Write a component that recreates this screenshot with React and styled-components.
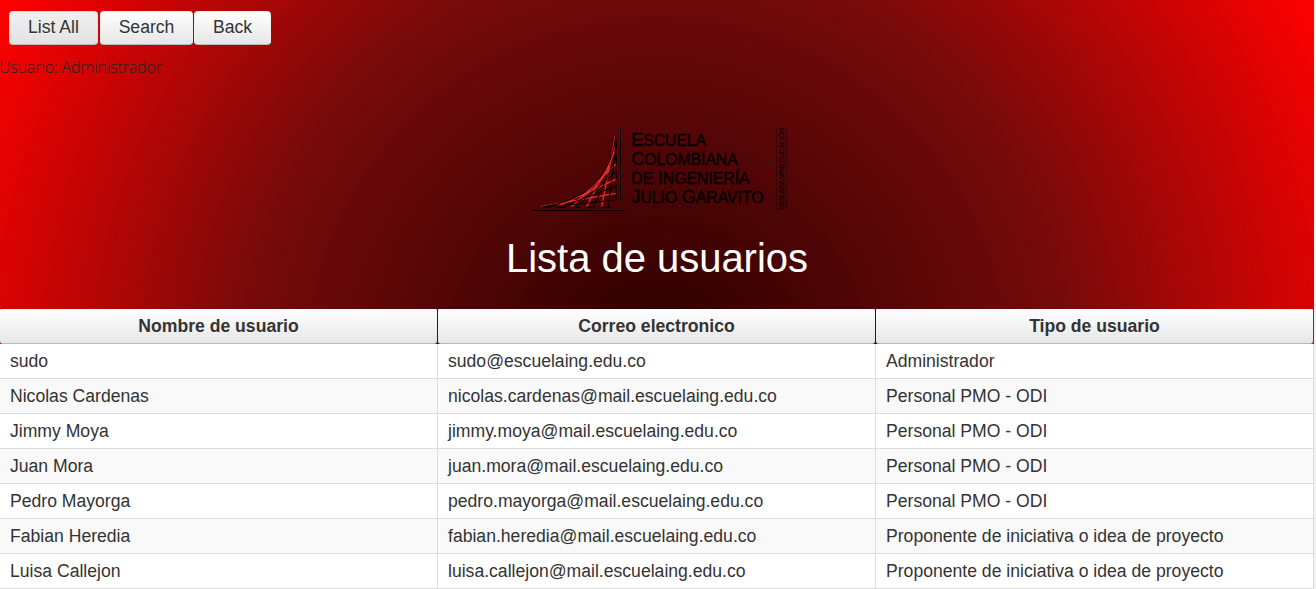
import React from "react";
import styled, { createGlobalStyle } from "styled-components";

const GlobalStyle = createGlobalStyle`
  html, body { margin: 0; padding: 0; }
  body {
    background: #f1f1f1;
    color: #333;
    font-family: "Liberation Sans", Arial, sans-serif;
    font-size: 17.6px;
    overflow: hidden;
  }
`;

const Page = styled.main`
  width: 1314px;
  height: 589px;
  overflow: hidden;
  background: radial-gradient(circle 750px at 657px 368px, #280000 0%, #760a0a 54.5%, #ff0000 100%);
`;

const Header = styled.header`
  height: 309px;
  display: flex;
  flex-direction: column;
`;

const Toolbar = styled.nav`
  display: flex;
  padding: 11px 0 0 9px;
`;

const Button = styled.button`
  box-sizing: border-box;
  width: ${(p) => p.$width}px;
  height: 34px;
  margin: 0 ${(p) => p.$gap || 0}px 0 0;
  padding: 0 0 1px;
  border: 1px solid ${(p) => (p.$active ? "#ddd" : "#eee")};
  border-bottom-color: #bbb;
  border-radius: 4px;
  background: ${(p) =>
    p.$active
      ? "linear-gradient(#f0f0f0, #e2e2e2)"
      : "linear-gradient(#ffffff, #e6e6e6)"};
  color: #333;
  font: 17.6px "Liberation Sans", Arial, sans-serif;
  text-shadow: 0 1px 0 #f3f3f3;
`;

const UserLine = styled.p`
  margin: 11px 0 0 -1px;
  color: #222;
  font: 300 16px/22px "Open Sans", "Noto Sans", sans-serif;
  letter-spacing: -0.18px;
`;

const Logo = styled.svg`
  display: block;
  width: 270px;
  height: 100px;
  margin: 42px 0 0 525px;
`;

const Title = styled.h1`
  margin: 15px 0 0;
  color: #fff;
  font-size: 40px;
  font-weight: 400;
  line-height: 46px;
  letter-spacing: -0.03px;
  text-align: center;
`;

const Table = styled.div`
  width: 1314px;
`;

const HeadRow = styled.div`
  display: grid;
  grid-template-columns: repeat(3, 438px);
  height: 35px;
`;

const HeadCell = styled.div`
  box-sizing: border-box;
  height: 35px;
  margin-right: 1px;
  border-bottom: 1px solid #bbb;
  border-radius: 1px 1px 3px 3px;
  background: linear-gradient(#ffffff, #e6e6e6);
  font-weight: 700;
  line-height: 34px;
  text-align: center;
  text-shadow: 0 1px 0 #f3f3f3;
`;

const Row = styled.div`
  display: grid;
  grid-template-columns: repeat(3, 438px);
  background: ${(p) => (p.$striped ? "#f9f9f9" : "#fff")};
`;

const Cell = styled.div`
  box-sizing: border-box;
  height: 35px;
  padding-left: 10px;
  border-right: 1px solid #ddd;
  border-bottom: 1px solid #ddd;
  line-height: 34px;
  white-space: nowrap;
`;

const columns = ["Nombre de usuario", "Correo electronico", "Tipo de usuario"];

const users = [
  ["sudo", "sudo@escuelaing.edu.co", "Administrador"],
  ["Nicolas Cardenas", "nicolas.cardenas@mail.escuelaing.edu.co", "Personal PMO - ODI"],
  ["Jimmy Moya", "jimmy.moya@mail.escuelaing.edu.co", "Personal PMO - ODI"],
  ["Juan Mora", "juan.mora@mail.escuelaing.edu.co", "Personal PMO - ODI"],
  ["Pedro Mayorga", "pedro.mayorga@mail.escuelaing.edu.co", "Personal PMO - ODI"],
  ["Fabian Heredia", "fabian.heredia@mail.escuelaing.edu.co", "Proponente de iniciativa o idea de proyecto"],
  ["Luisa Callejon", "luisa.callejon@mail.escuelaing.edu.co", "Proponente de iniciativa o idea de proyecto"],
];

// Each line is a list of [text, isCapital] runs, its baseline and its width.
const logoLines = [
  { y: 77, w: 224, runs: [["E", 1], ["SCUELA", 0]] },
  { y: 134, w: 319, runs: [["C", 1], ["OLOMBIANA", 0]] },
  { y: 191, w: 355, runs: [["DE ", 0], ["I", 1], ["NGENIERÍA", 0]] },
  { y: 248, w: 397, runs: [["J", 1], ["ULIO ", 0], ["G", 1], ["ARAVITO", 0]] },
];

function SchoolLogo() {
  return (
    <Logo viewBox="0 0 810 300">
      <path
        d="M48 260L272 220M95 260L272 178M140 260L272 133M185 260L272 90M230 260L272 45M165 234Q250 190 268 80"
        fill="none"
        stroke="#de2f2b"
        strokeWidth="4"
      />
      <g fill="none" stroke="#080000" strokeWidth="3">
        <path d="M60 262L274 240M107 262L274 198M152 262L274 154M205 262L274 111M250 262L274 67" />
        <path d="M95 262h27M140 262h27M185 262h27M230 262h27M274 60v30M274 105v28M274 150v28M274 192v28M274 238v-12" />
        <path d="M50 261Q252 235 273 45" />
      </g>
      <path d="M24 271.500H299M286.500 24V242" stroke="#080000" strokeWidth="3" />
      <g fill="#080000" stroke="#080000" fontFamily="Liberation Sans, Arial, sans-serif">
        {logoLines.map((l) => (
          <text key={l.y} x="319" y={l.y} textLength={l.w} lengthAdjust="spacingAndGlyphs" xmlSpace="preserve" strokeWidth="1.600">
            {l.runs.map(([t, big]) => (
              <tspan key={t} fontSize={big ? 54 : 47}>{t}</tspan>
            ))}
          </text>
        ))}
        <text transform="translate(777 270) rotate(-90)" fontSize="20" textLength="246" lengthAdjust="spacingAndGlyphs" strokeWidth="0.200">
          VIGILADA MINEDUCACIÓN
        </text>
      </g>
      <path d="M754.500 24V271M784.500 24V271" stroke="#250202" strokeWidth="2" />
    </Logo>
  );
}

export default function App() {
  return (
    <>
      <GlobalStyle />
      <Page>
        <Header>
          <Toolbar>
            <Button $width={89} $gap={2} $active>List All</Button>
            <Button $width={93} $gap={1}>Search</Button>
            <Button $width={77}>Back</Button>
          </Toolbar>
          <UserLine>Usuario: Administrador</UserLine>
          <SchoolLogo />
          <Title>Lista de usuarios</Title>
        </Header>
        <Table>
          <HeadRow>
            {columns.map((c) => <HeadCell key={c}>{c}</HeadCell>)}
          </HeadRow>
          {users.map((u, i) => (
            <Row key={u[0]} $striped={i % 2 === 1}>
              {u.map((v, j) => <Cell key={j}>{v}</Cell>)}
            </Row>
          ))}
        </Table>
      </Page>
    </>
  );
}
